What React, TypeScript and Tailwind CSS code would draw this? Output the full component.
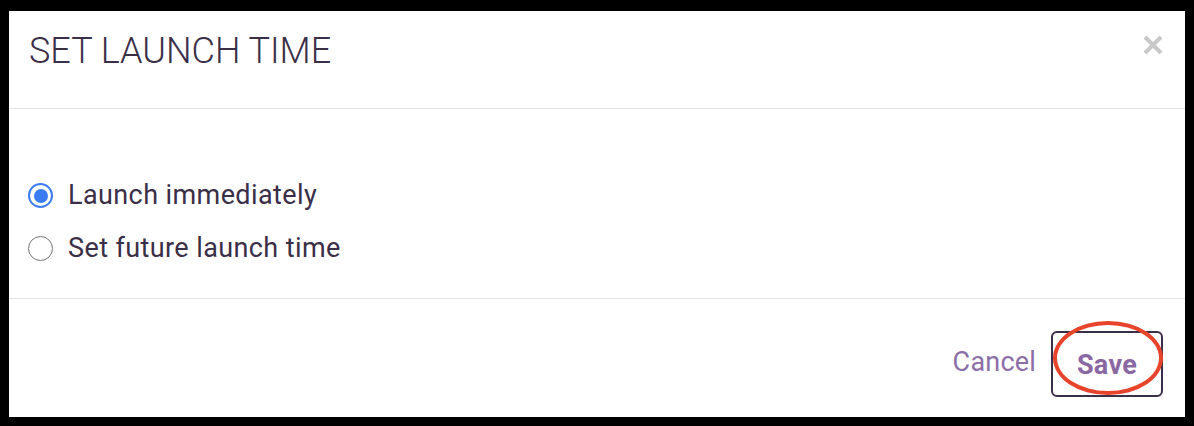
import React from "react";

function Radio({ checked }: { checked: boolean }) {
  if (checked) {
    return (
      <span className="flex h-[25px] w-[25px] items-center justify-center rounded-full border-[2.5px] border-[#3b7cf0] bg-white">
        <span className="h-[14px] w-[14px] rounded-full bg-[#3b7cf0]" />
      </span>
    );
  }
  return <span className="h-[25px] w-[25px] rounded-full border-[1.5px] border-[#767676] bg-white" />;
}

export default function App() {
  const font = { fontFamily: "Roboto, 'Liberation Sans', sans-serif" };

  return (
    <div className="h-[426px] w-[1194px] bg-black pb-[9px] pl-[9px] pr-[9px] pt-[11px]" style={font}>
      <div className="flex h-full flex-col bg-white">
        <div className="flex h-[98px] items-start justify-between border-b border-[#e3e3e3] pl-[20px] pr-[22px] pt-[22px]">
          <h1 className="text-[36px] font-light leading-[36px] text-[#3b2f48]">SET LAUNCH TIME</h1>
          <button type="button" className="mt-[2px] text-[#c8c8c8]" aria-label="Close">
            <svg width="20" height="20" viewBox="0 0 20 20">
              <path d="M2 2 L18 18 M18 2 L2 18" stroke="currentColor" strokeWidth="4" />
            </svg>
          </button>
        </div>

        <div className="flex h-[190px] flex-col border-b border-[#e3e3e3] pl-[19px] pt-[60px]">
          <label className="flex h-[53px] items-center gap-[15px]">
            <Radio checked />
            <span className="text-[27px] tracking-[0.4px] text-[#3b2f48]">Launch immediately</span>
          </label>
          <label className="flex h-[53px] items-center gap-[15px]">
            <Radio checked={false} />
            <span className="text-[27px] tracking-[0.4px] text-[#3b2f48]">Set future launch time</span>
          </label>
        </div>

        <div className="flex flex-1 items-start justify-end gap-[15px] pr-[22px] pt-[32px]">
          <button type="button" className="mt-[15px] text-[27px] leading-[32px] tracking-[0.2px] text-[#8c6fa6]">
            Cancel
          </button>
          <div className="relative">
            <button
              type="button"
              className="flex h-[66px] w-[112px] items-center justify-center rounded-[6px] border-2 border-[#3b2f48] pt-[2px] text-[27px] font-bold tracking-[0.3px] text-[#8a68a2]"
            >
              Save
            </button>
            <span className="pointer-events-none absolute left-[2px] top-[-10px] h-[74px] w-[110px] rounded-[50%] border-[4px] border-[#e8442c]" />
          </div>
        </div>
      </div>
    </div>
  );
}
